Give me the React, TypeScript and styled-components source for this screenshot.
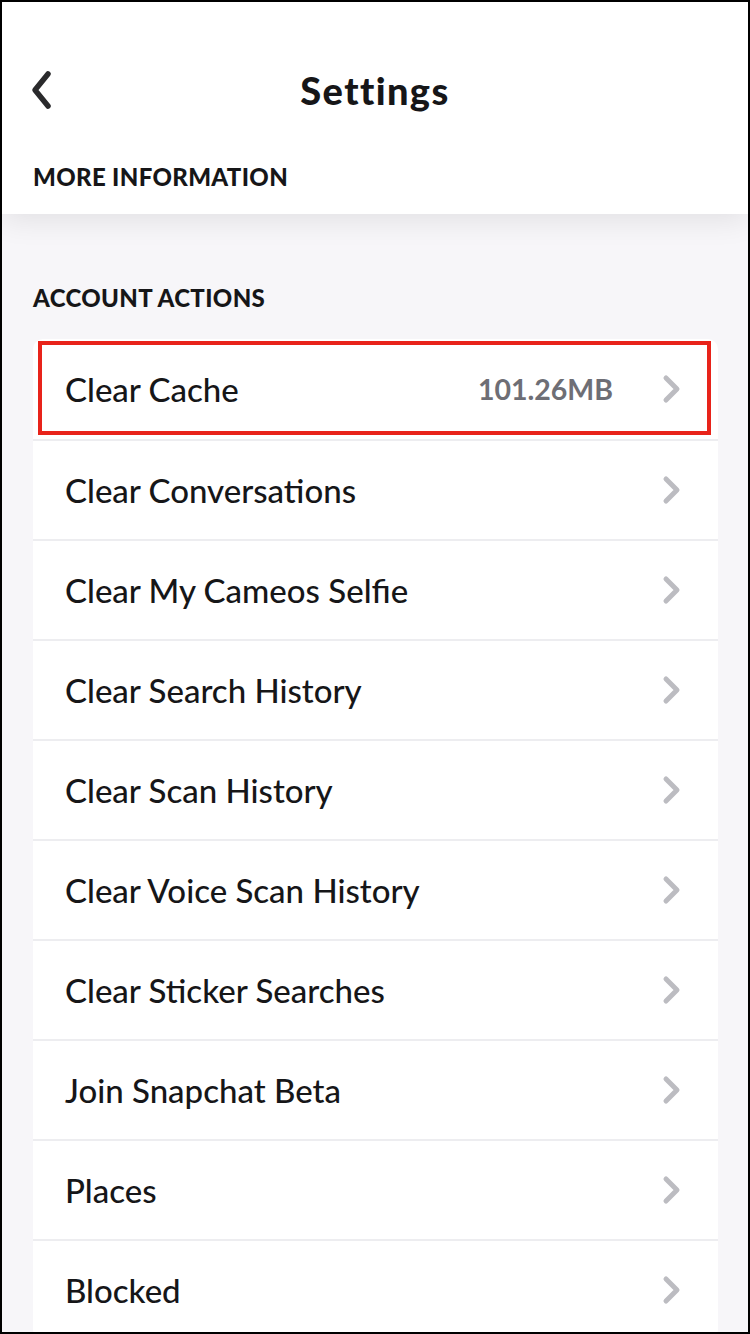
import React from 'react'
import styled, { createGlobalStyle } from 'styled-components'

const GlobalStyle = createGlobalStyle`
  html, body {
    margin: 0;
    padding: 0;
    background: #f7f6f9;
  }
  * {
    box-sizing: border-box;
  }
`

const items = [
  { label: 'Clear Cache', value: '101.26MB', highlighted: true },
  { label: 'Clear Conversations' },
  { label: 'Clear My Cameos Selfie' },
  { label: 'Clear Search History' },
  { label: 'Clear Scan History' },
  { label: 'Clear Voice Scan History' },
  { label: 'Clear Sticker Searches' },
  { label: 'Join Snapchat Beta' },
  { label: 'Places' },
  { label: 'Blocked' }
]

const BackIcon = () => (
  <svg width='26' height='40' viewBox='0 0 26 40'>
    <path
      d='M19 4 L6 20 L19 36'
      fill='none'
      stroke='#2a2a2c'
      strokeWidth='5.5'
      strokeLinecap='round'
      strokeLinejoin='round'
    />
  </svg>
)

const ChevronIcon = () => (
  <svg width='20' height='30' viewBox='0 0 20 30'>
    <path
      d='M4 4 L15 15 L4 26'
      fill='none'
      stroke='#bcbcc1'
      strokeWidth='5'
      strokeLinecap='round'
      strokeLinejoin='round'
    />
  </svg>
)

export default function App() {
  return (
    <>
      <GlobalStyle />
      <Frame>
        <Header>
          <TopBar>
            <BackButton type='button'>
              <BackIcon />
            </BackButton>
            <Title>Settings</Title>
          </TopBar>
          <SectionTitle>MORE INFORMATION</SectionTitle>
        </Header>

        <Body>
          <SectionTitle>ACCOUNT ACTIONS</SectionTitle>
          <Card>
            {items.map((item) => (
              <Row key={item.label}>
                <RowLabel>{item.label}</RowLabel>
                <RowRight>
                  {item.value && <RowValue>{item.value}</RowValue>}
                  <ChevronIcon />
                </RowRight>
                {item.highlighted && <Highlight />}
              </Row>
            ))}
          </Card>
        </Body>
      </Frame>
    </>
  )
}

const Frame = styled.div`
  width: 750px;
  height: 1334px;
  overflow: hidden;
  border: 2px solid #000;
  background: #f7f6f9;
  font-family: Lato, 'Noto Sans', sans-serif;
  color: #161618;
`

const Header = styled.div`
  background: #fff;
  height: 212px;
  padding: 0 31px;
  position: relative;
  z-index: 1;
  box-shadow: 0 6px 28px rgba(0, 0, 0, 0.09);
`

const TopBar = styled.div`
  height: 160px;
  display: flex;
  align-items: center;
  justify-content: center;
  position: relative;
  padding-top: 16px;
`

const BackButton = styled.button`
  position: absolute;
  left: -4px;
  top: 68px;
  border: none;
  background: none;
  padding: 0;
  display: flex;
`

const Title = styled.h1`
  margin: 0;
  font-size: 38px;
  font-weight: 900;
  letter-spacing: 1.4px;
`

const SectionTitle = styled.div`
  font-size: 24px;
  font-weight: 900;
  letter-spacing: 0.35px;
  line-height: 30px;
`

const Body = styled.div`
  padding: 69px 30px 0 31px;

  ${SectionTitle} {
    margin-bottom: 26px;
  }
`

const Card = styled.div`
  background: #fff;
  border-radius: 10px;
  overflow: hidden;
`

const Row = styled.div`
  position: relative;
  height: 100px;
  display: flex;
  align-items: center;
  justify-content: space-between;
  padding: 0 36px 0 32px;

  & + & {
    border-top: 2px solid #ededf0;
  }
`

const RowLabel = styled.span`
  font-size: 33px;
  font-weight: 500;
`

const RowRight = styled.div`
  display: flex;
  align-items: center;
  gap: 49px;
`

const RowValue = styled.span`
  font-size: 28.5px;
  font-weight: 700;
  color: #6e6e75;
`

const Highlight = styled.div`
  position: absolute;
  left: 5px;
  right: 7px;
  top: 2px;
  bottom: 4px;
  border: 4px solid #e8231a;
  pointer-events: none;
`
